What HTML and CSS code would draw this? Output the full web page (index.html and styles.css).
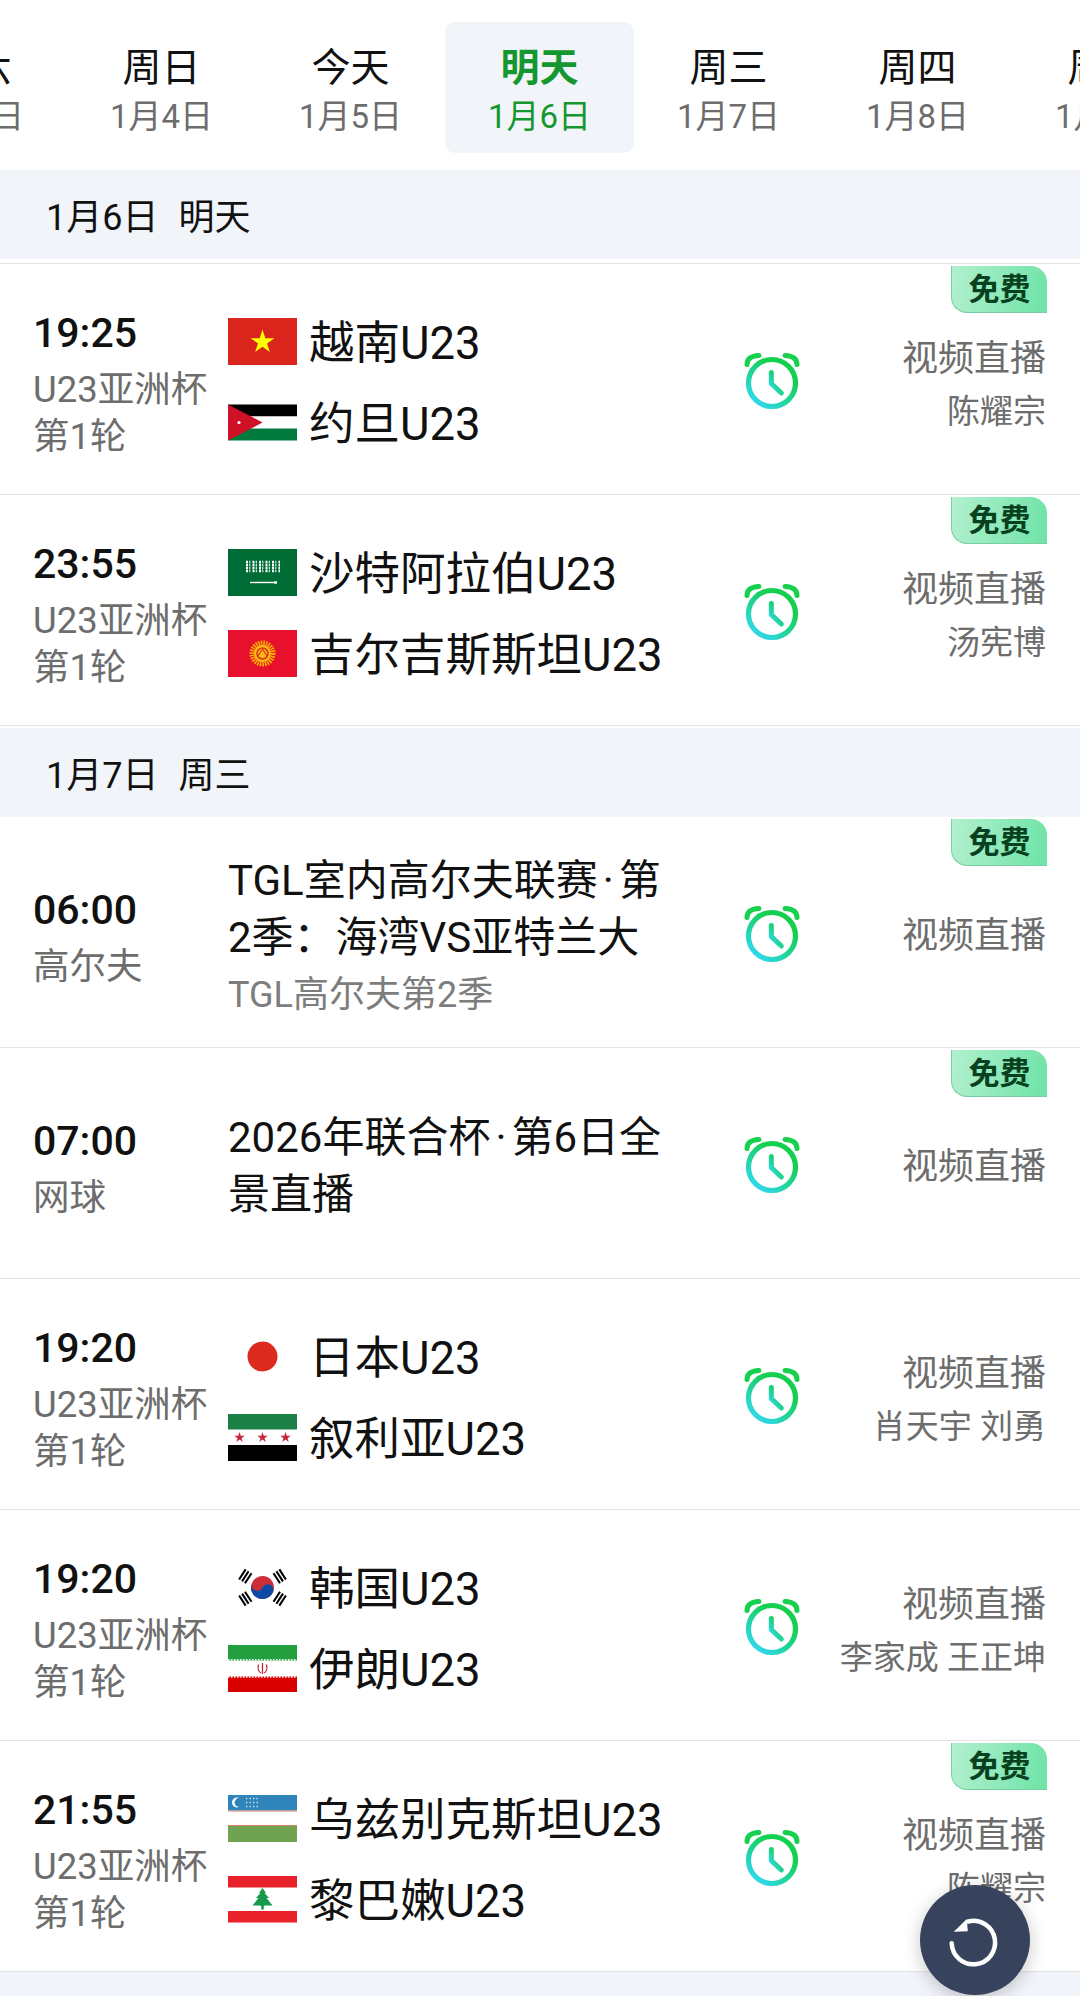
FILE: index.html
```html
<!DOCTYPE html>
<html lang="zh-CN">
<head>
    <meta charset="UTF-8">
    <title>赛程</title>
    <link rel="stylesheet" href="styles.css">
</head>
<body>
    <!-- shared svg bits -->
    <svg class="defs" aria-hidden="true">
        <defs>
            <linearGradient id="clockGrad" x1="0.8" y1="0.35" x2="0.3" y2="1">
                <stop offset="0" stop-color="#14d04e"/>
                <stop offset="1" stop-color="#2ed8e6"/>
            </linearGradient>
            <polygon id="star" points="0,-1 .225,-.31 .951,-.31 .363,.118 .588,.809 0,.382 -.588,.809 -.363,.118 -.951,-.31 -.225,-.31"/>
            <symbol id="clock" viewBox="-30 -30 60 60">
                <circle cx="0" cy="0" r="23.5" fill="none" stroke="url(#clockGrad)" stroke-width="5.2"/>
                <path d="M-.7 -10.5V.7L9.3 10" fill="none" stroke="url(#clockGrad)" stroke-width="5" stroke-linecap="round" stroke-linejoin="round"/>
                <path d="M-25 -18.5Q-25 -27 -13 -27.5M25 -18.5Q25 -27 13 -27.5" fill="none" stroke="#16d04e" stroke-width="5" stroke-linecap="round"/>
            </symbol>
        </defs>
    </svg>

    <div class="tabs">
        <div class="tab-track">
            <div class="tab"><span class="tab-day">周六</span><span class="tab-date">1月3日</span></div>
            <div class="tab"><span class="tab-day">周日</span><span class="tab-date">1月4日</span></div>
            <div class="tab"><span class="tab-day">今天</span><span class="tab-date">1月5日</span></div>
            <div class="tab active"><span class="tab-day">明天</span><span class="tab-date">1月6日</span></div>
            <div class="tab"><span class="tab-day">周三</span><span class="tab-date">1月7日</span></div>
            <div class="tab"><span class="tab-day">周四</span><span class="tab-date">1月8日</span></div>
            <div class="tab"><span class="tab-day">周五</span><span class="tab-date">1月9日</span></div>
        </div>
    </div>

    <div class="day-head first"><span>1月6日</span><span>明天</span></div>

    <div class="row">
        <span class="free">免费</span>
        <div class="time-col"><div class="time">19:25</div><div class="league">U23亚洲杯</div><div class="league">第1轮</div></div>
        <div class="match">
            <div class="team">
                <svg class="flag" viewBox="0 0 69 47"><rect width="69" height="47" fill="#da251d"/><use href="#star" transform="translate(34.5 24) scale(12.5)" fill="#ffff00"/></svg>
                <span>越南U23</span>
            </div>
            <div class="team">
                <svg class="flag" viewBox="0 0 69 47"><rect y="5.5" width="69" height="12" fill="#000"/><rect y="17.5" width="69" height="12" fill="#fff"/><rect y="29.5" width="69" height="12" fill="#007a3d"/><path d="M0 5.5L34.5 23.5L0 41.5Z" fill="#ce1126"/><circle cx="11" cy="23.5" r="1.6" fill="#fff"/></svg>
                <span>约旦U23</span>
            </div>
        </div>
        <svg class="clock"><use href="#clock"/></svg>
        <div class="live"><div class="live-type">视频直播</div><div class="live-names">陈耀宗</div></div>
    </div>

    <div class="row">
        <span class="free">免费</span>
        <div class="time-col"><div class="time">23:55</div><div class="league">U23亚洲杯</div><div class="league">第1轮</div></div>
        <div class="match">
            <div class="team">
                <svg class="flag" viewBox="0 0 69 47"><rect width="69" height="47" fill="#006c35"/><path d="M18 13H52M18 16H52M18 19H52M18 22H52" stroke="#fff" stroke-width="2.4" stroke-dasharray="2 1.3 1 2.2"/><path d="M22 33.5H46" stroke="#fff" stroke-width="1.4"/><path d="M46 33.5H49" stroke="#fff" stroke-width="2.4"/></svg>
                <span>沙特阿拉伯U23</span>
            </div>
            <div class="team">
                <svg class="flag" viewBox="0 0 69 47"><rect width="69" height="47" fill="#e8112d"/><circle cx="34.5" cy="23.5" r="10.5" fill="none" stroke="#f7b500" stroke-width="5" stroke-dasharray="1.5 1"/><circle cx="34.5" cy="23.5" r="8.5" fill="#fdbb10"/><circle cx="34.5" cy="23.5" r="5.5" fill="none" stroke="#d8361e" stroke-width="1.6"/><path d="M30 26L34.5 19L39 26" fill="none" stroke="#d8361e" stroke-width="1.2"/></svg>
                <span>吉尔吉斯斯坦U23</span>
            </div>
        </div>
        <svg class="clock"><use href="#clock"/></svg>
        <div class="live"><div class="live-type">视频直播</div><div class="live-names">汤宪博</div></div>
    </div>

    <div class="day-head second"><span>1月7日</span><span>周三</span></div>

    <div class="row">
        <span class="free">免费</span>
        <div class="time-col"><div class="time">06:00</div><div class="league">高尔夫</div></div>
        <div class="match">
            <div class="title">TGL室内高尔夫联赛<span class="dot">·</span>第<br>2季：海湾VS亚特兰大</div>
            <div class="subtitle">TGL高尔夫第2季</div>
        </div>
        <svg class="clock"><use href="#clock"/></svg>
        <div class="live"><div class="live-type">视频直播</div></div>
    </div>

    <div class="row">
        <span class="free">免费</span>
        <div class="time-col"><div class="time">07:00</div><div class="league">网球</div></div>
        <div class="match">
            <div class="title">2026年联合杯<span class="dot">·</span>第6日全<br>景直播</div>
        </div>
        <svg class="clock"><use href="#clock"/></svg>
        <div class="live"><div class="live-type">视频直播</div></div>
    </div>

    <div class="row">
        <div class="time-col"><div class="time">19:20</div><div class="league">U23亚洲杯</div><div class="league">第1轮</div></div>
        <div class="match">
            <div class="team">
                <svg class="flag" viewBox="0 0 69 47"><circle cx="34.5" cy="23.5" r="15" fill="#dc2a1f"/></svg>
                <span>日本U23</span>
            </div>
            <div class="team">
                <svg class="flag" viewBox="0 0 69 47"><rect width="69" height="15.5" fill="#1c8046"/><rect y="31" width="69" height="16" fill="#000"/><use href="#star" transform="translate(11.5 23.5) scale(5.5)" fill="#c4273a"/><use href="#star" transform="translate(34.5 23.5) scale(5.5)" fill="#c4273a"/><use href="#star" transform="translate(57.5 23.5) scale(5.5)" fill="#c4273a"/></svg>
                <span>叙利亚U23</span>
            </div>
        </div>
        <svg class="clock"><use href="#clock"/></svg>
        <div class="live"><div class="live-type">视频直播</div><div class="live-names">肖天宇 刘勇</div></div>
    </div>

    <div class="row">
        <div class="time-col"><div class="time">19:20</div><div class="league">U23亚洲杯</div><div class="league">第1轮</div></div>
        <div class="match">
            <div class="team">
                <svg class="flag" viewBox="0 0 69 47">
                    <g transform="translate(34.5 23.5)">
                        <g transform="rotate(25)"><circle r="11.5" fill="#cd2e3a"/><path d="M-11.5 0A5.75 5.75 0 0 0 0 0A5.75 5.75 0 0 1 11.5 0A11.5 11.5 0 0 1 -11.5 0Z" fill="#0b4ba5"/></g>
                        <g stroke="#000" stroke-width="2.1">
                            <path transform="rotate(-57) translate(0 -20.5)" d="M-6 -3.5H6M-6 0H6M-6 3.5H6"/>
                            <path transform="rotate(57) translate(0 -20.5)" d="M-6 -3.5H6M-6 0H6M-6 3.5H6"/>
                            <path transform="rotate(-123) translate(0 -20.5)" d="M-6 -3.5H6M-6 0H6M-6 3.5H6"/>
                            <path transform="rotate(123) translate(0 -20.5)" d="M-6 -3.5H6M-6 0H6M-6 3.5H6"/>
                        </g>
                    </g>
                </svg>
                <span>韩国U23</span>
            </div>
            <div class="team">
                <svg class="flag" viewBox="0 0 69 47"><rect width="69" height="15.5" fill="#239f40"/><rect y="31.5" width="69" height="15.5" fill="#da0000"/><path d="M0 14.8H69M0 32H69" stroke="#fff" stroke-width="1.4" stroke-dasharray="1.5 1.5"/><path d="M34.5 18V29M30.5 19.5Q29 26 33 28M38.5 19.5Q40 26 36 28" fill="none" stroke="#c8202a" stroke-width="1.2"/></svg>
                <span>伊朗U23</span>
            </div>
        </div>
        <svg class="clock"><use href="#clock"/></svg>
        <div class="live"><div class="live-type">视频直播</div><div class="live-names">李家成 王正坤</div></div>
    </div>

    <div class="row">
        <span class="free">免费</span>
        <div class="time-col"><div class="time">21:55</div><div class="league">U23亚洲杯</div><div class="league">第1轮</div></div>
        <div class="match">
            <div class="team">
                <svg class="flag" viewBox="0 0 69 47"><rect width="69" height="15.5" fill="#2f85bb"/><rect y="31" width="69" height="16" fill="#6fa352"/><path d="M0 16H69M0 30.5H69" stroke="#d9816b" stroke-width="1"/><circle cx="9" cy="7.5" r="5" fill="#fff"/><circle cx="11" cy="7.5" r="4.4" fill="#2f85bb"/><path d="M18 3.5H31M18 7.5H31M18 11.5H31" stroke="#fff" stroke-width="1.3" stroke-dasharray="1.3 2.2" opacity=".8"/></svg>
                <span>乌兹别克斯坦U23</span>
            </div>
            <div class="team">
                <svg class="flag" viewBox="0 0 69 47"><rect width="69" height="11.5" fill="#e8212b"/><rect y="35" width="69" height="11.5" fill="#e8212b"/><path d="M34.5 12L38 17H36.5L41 22H38.5L44.5 29.5H37L35.8 30V33.5H33.2V30L32 29.5H24.5L30.5 22H28L32.5 17H31Z" fill="#16994a"/></svg>
                <span>黎巴嫩U23</span>
            </div>
        </div>
        <svg class="clock"><use href="#clock"/></svg>
        <div class="live"><div class="live-type">视频直播</div><div class="live-names">陈耀宗</div></div>
    </div>

    <div class="day-head"><span>1月8日</span><span>周四</span></div>

    <button class="fab" aria-label="刷新">
        <svg viewBox="-55 -55 110 110" width="110" height="110">
            <g transform="translate(-1.7 2.7)">
                <path d="M-5 -21.2A21.7 21.7 0 1 1 -21.6 .5" fill="none" stroke="#fff" stroke-width="4.5" stroke-linecap="round"/>
                <path d="M-19.5 -11L-6.5 -23.8L-5.5 -11.5Z" fill="#fff"/>
            </g>
        </svg>
    </button>
</body>
</html>
```

FILE: styles.css
```css
html, body {
    margin: 0;
    padding: 0;
    background: #fff;
}
body {
    position: relative;
    width: 1080px;
    height: 1996px;
    overflow: hidden;
    font-family: Roboto, "Noto Sans CJK SC", sans-serif;
    color: #111;
}
.defs {
    position: absolute;
    width: 0;
    height: 0;
}

/* date tabs */
.tabs {
    overflow: hidden;
    padding-top: 22px;
    margin-bottom: 17px;
}
.tab-track {
    display: flex;
    margin-left: -122px;
}
.tab {
    flex: 0 0 189px;
    height: 131px;
    box-sizing: border-box;
    display: flex;
    flex-direction: column;
    align-items: center;
    padding-top: 21px;
    border-radius: 10px;
}
.tab-day {
    font-size: 39px;
    line-height: 50px;
}
.tab-date {
    font-size: 33px;
    line-height: 47px;
    color: #6d6d6d;
}
.tab.active {
    background: #f1f4f9;
}
.tab.active .tab-day {
    color: #14972f;
    font-weight: 700;
}
.tab.active .tab-date {
    color: #14972f;
}

/* day header */
.day-head {
    height: 89px;
    box-sizing: border-box;
    padding-left: 46px;
    display: flex;
    gap: 20px;
    background: #f1f4f9;
    font-size: 36px;
    line-height: 96px;
}
.day-head.first {
    margin-bottom: 5px;
    box-shadow: 0 4px 0 #fff, 0 5px 0 #e6e6e6;
}
.day-head.second {
    margin-top: 2px;
}

/* fixture rows */
.row {
    position: relative;
    height: 231px;
    box-sizing: border-box;
    border-bottom: 1px solid #e4e4e4;
    padding: 0 34px 0 33px;
    display: grid;
    grid-template-columns: 195px 514px 60px 1fr;
    align-items: center;
}
.free {
    position: absolute;
    top: 2px;
    right: 33px;
    width: 96px;
    height: 47px;
    box-sizing: border-box;
    border-left: 1px solid #79cfa3;
    border-bottom: 1px solid #79cfa3;
    border-radius: 0 16px 0 16px;
    background: linear-gradient(100deg, #b2f0cf, #6ee3a6);
    color: #07411f;
    font-size: 31px;
    font-weight: 600;
    line-height: 47px;
    text-align: center;
}
.time-col {
    margin-top: 8px;
}
.time {
    margin-bottom: 6px;
    font-size: 41px;
    font-weight: 500;
    line-height: 54px;
}
.league {
    font-size: 36.5px;
    line-height: 47px;
    color: #6d6d6d;
}
.team {
    height: 81px;
    display: flex;
    align-items: center;
    gap: 12px;
    font-size: 45.5px;
}
.flag {
    flex: none;
    width: 69px;
    height: 47px;
    margin-top: 5px;
}
.title {
    padding-top: 5px;
    font-size: 42px;
    line-height: 57px;
}
.dot {
    margin: 0 5px;
}
.subtitle {
    margin-top: 6px;
    font-size: 36px;
    line-height: 46px;
    color: #7d7d7d;
}
.clock {
    width: 60px;
    height: 60px;
    margin-top: 8px;
}
.live {
    margin-top: 8px;
    text-align: right;
    color: #6d6d6d;
}
.live-type {
    font-size: 36px;
    line-height: 50px;
}
.live-names {
    margin-top: 8px;
    font-size: 33px;
    line-height: 40px;
}

/* floating refresh */
.fab {
    position: absolute;
    left: 920px;
    top: 1885px;
    width: 110px;
    height: 110px;
    border: none;
    border-radius: 50%;
    padding: 0;
    background: #37435c;
    box-shadow: 0 4px 18px rgba(0, 0, 0, .22);
    display: flex;
    align-items: center;
    justify-content: center;
}
```
